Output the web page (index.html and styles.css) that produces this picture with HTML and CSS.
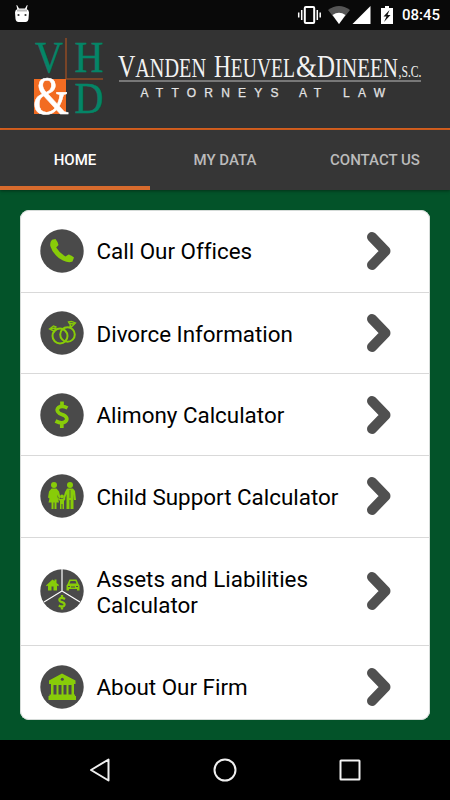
FILE: index.html
```html
<!DOCTYPE html>
<html lang="en">
<head>
<meta charset="utf-8">
<title>Vanden Heuvel &amp; Dineen, S.C.</title>
<link rel="stylesheet" href="styles.css">
</head>
<body>
<div class="status">
  <svg class="droid" viewBox="0 0 16 18" width="16" height="18"><path fill="#fff" d="M3 0l2 3.500h6l2-3.500.6.3L12.800 4Q15 5 15 7.500L14.500 14Q14 17 11.500 17h-7Q2 17 1.500 14L1 7.500Q1 5 3.200 4L2.400.3z"/><path stroke="#bbb" stroke-width="2" d="M3 5.500h10"/><circle cx="4.500" cy="10" r="1.100" fill="#333"/><circle cx="11.500" cy="10" r="1.100" fill="#333"/></svg>
  <svg class="signals" viewBox="298 5 98 20" width="98" height="20">
    <rect x="305.800" y="7" width="9.400" height="16" rx="1" fill="none" stroke="#fff" stroke-width="2"/>
    <path stroke="#fff" stroke-width="1.500" d="M302.700 10v10M299.700 12.500v5M318.300 10v10M321.200 12.500v5"/>
    <path fill="#555" d="M329 10Q340 2 351 10L340 24z"/><path fill="#fff" d="M333.500 15Q340 10.500 346.500 15L340 24z"/>
    <path fill="#fff" d="M371.500 6v18H353.500z"/>
    <path fill="#fff" d="M382 8h4V6h4v2h4v16h-12z"/><path fill="#111" d="M390.500 10l-6 6.500h3l-2.500 5.500 6.500-7h-3z"/>
  </svg>
  <span class="clock">08:45</span>
</div>
<header class="brand">
  <svg viewBox="0 30 450 98" width="450" height="98">
    <rect x="34" y="79" width="32" height="35" fill="#f26c22"/>
    <path d="M66 38v41M66 79h37" stroke="#914b25" stroke-width="1.500"/>
    <g class="mono">
      <text x="35" y="72" textLength="28" lengthAdjust="spacingAndGlyphs">V</text>
      <text x="74.500" y="72" textLength="29" lengthAdjust="spacingAndGlyphs">H</text>
      <text x="74.500" y="113" textLength="29" lengthAdjust="spacingAndGlyphs">D</text>
      <text class="amp" x="33" y="114" textLength="36" lengthAdjust="spacingAndGlyphs">&amp;</text>
    </g>
    <g class="name">
      <text x="118" y="77" textLength="88" lengthAdjust="spacingAndGlyphs"><tspan class="cap">V</tspan>ANDEN</text>
      <text x="214" y="77" textLength="81" lengthAdjust="spacingAndGlyphs"><tspan class="cap">H</tspan>EUVEL</text>
      <text class="cap" x="296" y="77" textLength="21" lengthAdjust="spacingAndGlyphs">&amp;</text>
      <text x="317" y="77" textLength="81" lengthAdjust="spacingAndGlyphs"><tspan class="cap">D</tspan>INEEN</text>
      <text class="suffix" x="398.500" y="77" textLength="23" lengthAdjust="spacingAndGlyphs">,S.C.</text>
    </g>
    <path d="M119 81h302" stroke="#909090" stroke-width="1.500"/>
    <g class="tagline">
      <text x="140.500" y="96.500" textLength="138">ATTORNEYS</text>
      <text x="299" y="96.500" textLength="22">AT</text>
      <text x="343" y="96.500" textLength="42">LAW</text>
    </g>
  </svg>
</header>
<nav class="tabs"><a class="tab active">HOME</a><a class="tab">MY DATA</a><a class="tab">CONTACT US</a></nav>
<main class="content">
  <ul class="card">
    <li class="row">
      <svg class="icon" viewBox="0 0 44 44"><circle cx="22" cy="22" r="21.700"/><path class="g" d="M12 10.700L15.500 10Q18 13 18.500 16L16.200 18.500Q19 23.500 25.500 27.500L28.500 25.500Q32 26.300 34 28.500L32.500 32.500Q29 34.500 23 31.500 13 26.500 10.300 17 9.800 13 12 10.700z"/></svg>
      <span class="label">Call Our Offices</span>
      <svg class="chevron" viewBox="0 0 26 40"><path d="M6 6L19.500 20 6 34"/></svg>
    </li>
    <li class="row">
      <svg class="icon" viewBox="0 0 44 44"><circle cx="22" cy="22" r="21.700"/><g class="l"><circle cx="20" cy="25" r="7.500"/><circle cx="27.500" cy="23.500" r="7.300"/><path class="thin" d="M9.500 18l4-3 2.500 1-1.500 4.500zM11 18l4-1M28.500 11l3-.5 4 1.500-4 4zM29 12.500l5 .5M13 20l3-1M29 15l3 1"/></g></svg>
      <span class="label">Divorce Information</span>
      <svg class="chevron" viewBox="0 0 26 40"><path d="M6 6L19.500 20 6 34"/></svg>
    </li>
    <li class="row">
      <svg class="icon" viewBox="0 0 44 44"><circle cx="22" cy="22" r="21.700"/><path class="dollar" d="M27.500 15Q22 12 18.500 14.500C15.500 17.500 18.500 20.300 22 21.500 27 23.200 28 26 25.500 28.500 22.500 31 18.500 29.500 15.500 28M22 8.500v5M21.800 30v5"/></svg>
      <span class="label">Alimony Calculator</span>
      <svg class="chevron" viewBox="0 0 26 40"><path d="M6 6L19.500 20 6 34"/></svg>
    </li>
    <li class="row">
      <svg class="icon" viewBox="0 0 44 44"><circle cx="22" cy="22" r="21.700"/><g class="g"><circle cx="14" cy="11" r="3"/><circle cx="30" cy="11" r="3"/><circle cx="22" cy="22.500" r="2"/><path d="M11.500 14.500h5l2.500 3 1.500 6-1.500 1-2-4 2 8h-2.500v6.500h-2v-6.500h-1v6.500h-2v-6.500H8.500l2-8-1 4-1.500-1 1-6zM27 14.500h6l2 2.500 1 9h-2l-.5-6v15h-3V26h-1v9h-3V20L24.500 26 23 25l2-7zM20.500 25h3l1.500-1 .5 1-1.500 2v8h-1.500v-5h-1v5H20v-8l-2-2 .5-1z"/></g><path stroke="#4a4a4a" stroke-width=".7" d="M30 16v8"/></svg>
      <span class="label">Child Support Calculator</span>
      <svg class="chevron" viewBox="0 0 26 40"><path d="M6 6L19.500 20 6 34"/></svg>
    </li>
    <li class="row tall">
      <svg class="icon" viewBox="0 0 44 44"><circle cx="22" cy="22" r="21.700"/><path stroke="#fff" stroke-width="1.200" fill="none" d="M22 0v22L4 33M22 22l18 11"/><path class="g" d="M6 16.500L12.500 10.500l2 1.500v-1.500h2V14l2.500 2-.8 1.200-1.200-.7v5h-3.500v-4h-2v4H8v-5l-1.200.8zM27.500 15l2-4.500h7l2 4.500 1 1.500v5h-2.500v-1.500h-8v1.500h-2.500v-5z"/><path d="M29.500 14.500l1-2.500h5l1 2.500z" fill="#4a4a4a"/><path stroke="#4a4a4a" d="M28 17.500h2M36 17.500h2M31 18h4"/><path class="dollar small" d="M25 30Q21.500 28 19.800 29.700C18.500 31.500 20 32.500 22 33.200 25 34.300 25 35.500 24 36.800 22.500 38 20.500 37.500 18.800 36.500M22 26v3M22 38v2.500"/></svg>
      <span class="label">Assets and Liabilities Calculator</span>
      <svg class="chevron" viewBox="0 0 26 40"><path d="M6 6L19.500 20 6 34"/></svg>
    </li>
    <li class="row last">
      <svg class="icon" viewBox="0 0 44 44"><circle cx="22" cy="22" r="21.700"/><path class="g" d="M22 8.500L35.500 15.500v3.500H34v10.500h1V31h1v4H8.500v-4h1v-1.500H11V19H9v-3.500z"/><circle cx="22.300" cy="14.300" r="1.500"/><path stroke="#4a4a4a" stroke-width="3" d="M15 20v9.500M20 20v9.500M25 20v9.500M30 20v9.500"/></svg>
      <span class="label">About Our Firm</span>
      <svg class="chevron" viewBox="0 0 26 40"><path d="M6 6L19.500 20 6 34"/></svg>
    </li>
  </ul>
</main>
<footer class="navbar">
  <svg viewBox="0 0 30 30"><path d="M23.500 4.500v21L6 15z"/></svg>
  <svg viewBox="0 0 30 30"><circle cx="15" cy="15" r="10.500"/></svg>
  <svg viewBox="0 0 30 30"><rect x="5.500" y="5.500" width="19" height="19" rx=".5"/></svg>
</footer>
</body>
</html>
```
FILE: styles.css
```css
* { box-sizing: border-box; }
body {
  margin: 0;
  width: 450px;
  height: 800px;
  overflow: hidden;
  display: flex;
  flex-direction: column;
  background: #035329;
  font-family: Roboto, sans-serif;
}
svg { display: block; flex: none; }
.status {
  height: 30px;
  flex: none;
  display: flex;
  align-items: center;
  padding: 0 9px 0 14px;
  background: #090909;
  color: #fff;
}
.droid { margin-top: -2px; }
.signals { margin-left: auto; }
.clock {
  margin-left: 7px;
  width: 39px;
  font-size: 15px;
  font-weight: 500;
  white-space: nowrap;
}
.brand {
  height: 100px;
  flex: none;
  background: #333;
  border-bottom: 2px solid #d8601f;
}
.mono { font: 44px "Liberation Serif", serif; fill: #048567; stroke: #048567; stroke-width: .5px; }
.mono .amp { font-size: 54px; fill: #fff; stroke: #fff; }
.name { font: 27px "Liberation Serif", serif; fill: #f2f2f2; }
.name .cap { font-size: 32px; }
.name .suffix { font-size: 16px; }
.tagline { font: 12px "Liberation Sans", sans-serif; fill: #e4e4e4; stroke: #e4e4e4; stroke-width: .25px; }
.tabs {
  height: 60px;
  flex: none;
  display: grid;
  grid-template-columns: repeat(3, 1fr);
  background: #363636;
  box-shadow: 0 1px 3px rgba(0, 0, 0, .4);
}
.tab {
  display: flex;
  align-items: center;
  justify-content: center;
  padding-top: 4px;
  border-bottom: 4px solid transparent;
  color: #bbb;
  font-size: 15px;
  font-weight: 500;
}
.tab.active { color: #fff; border-bottom-color: #d76b2d; }
.content { flex: 1; min-height: 0; padding: 20px; }
.card {
  height: 510px;
  margin: 0;
  padding: 0;
  list-style: none;
  overflow: hidden;
  background: #fff;
  border-radius: 9px;
  box-shadow: inset 0 0 0 1px #d5dbd8;
}
.row {
  height: 81.6px;
  display: flex;
  align-items: center;
  padding: 0 38px 0 20px;
  border-bottom: 1px solid #d9d9d9;
}
.row:first-child { height: 82.8px; }
.row.tall { height: 108px; }
.row.last { height: 82px; border-bottom: 0; }
.icon { width: 44px; height: 44px; fill: #4a4a4a; }
.icon .g { fill: #88cc08; }
.icon .l { fill: none; stroke: #88cc08; stroke-width: 2; }
.icon .thin { stroke-width: 1.3; }
.icon .dollar { fill: none; stroke: #88cc08; stroke-width: 3.7; }
.icon .dollar.small { stroke-width: 2.3; }
.label {
  flex: 1;
  padding: 1px 8px 0 12.5px;
  color: #000;
  font-size: 22.4px;
  line-height: 26px;
  font-variant-ligatures: none;
}
.chevron { width: 26px; height: 40px; fill: none; stroke: #505050; stroke-width: 10; stroke-linecap: round; stroke-linejoin: round; }
.navbar {
  height: 60px;
  flex: none;
  display: flex;
  justify-content: space-between;
  align-items: center;
  padding: 0 85px;
  background: #000;
}
.navbar svg { width: 30px; height: 30px; fill: none; stroke: #f0f0f0; stroke-width: 2; stroke-linejoin: round; }
```
